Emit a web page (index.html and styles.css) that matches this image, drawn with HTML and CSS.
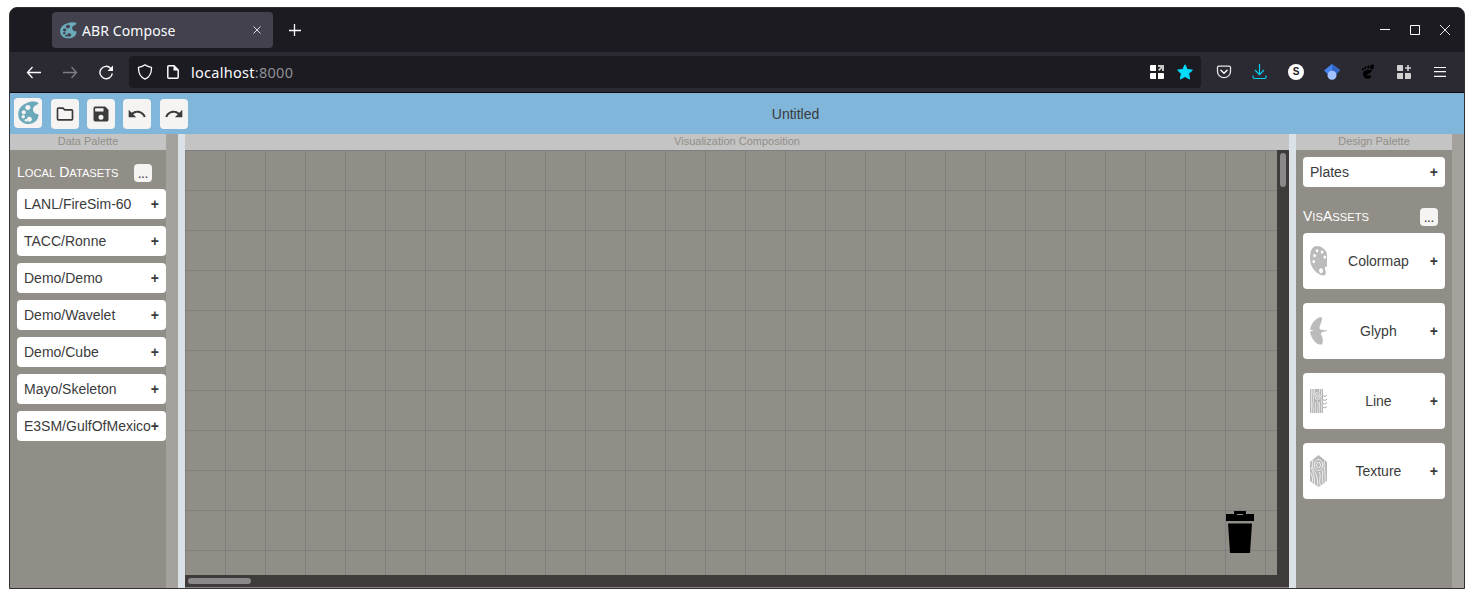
FILE: index.html
```html
<!DOCTYPE html>
<html lang="en">
<head>
<meta charset="utf-8">
<title>ABR Compose</title>
<link rel="stylesheet" href="styles.css">
</head>
<body>
<svg width="0" height="0" class="defs">
  <symbol id="palette" viewBox="0 0 21 24" preserveAspectRatio="none">
    <path fill-rule="evenodd" d="M10 1.500C13 0 19 0 20.300 2C21 4 15.500 4 15 8C14.800 11.500 18 13.500 20.300 13C21 17 18.500 21 14 22.500C9 24 3 22 1 17.500C-1 12 .5 4.500 10 1.500ZM9.800 4a2.500 2.500 0 1 0 .1 0ZM5.700 9.200a2.100 2.100 0 1 0 .1 0ZM5.200 14a1.700 1.700 0 1 0 .1 0ZM7.800 18a1.300 1.300 0 1 0 .1 0ZM11.300 15.800a2.500 2.500 0 1 0 .1 0Z"/>
  </symbol>
</svg>
<div class="window">
  <div class="tabbar">
    <div class="tab">
      <svg class="favicon" width="17" height="17"><use href="#palette"/></svg>
      <span class="tab-title">ABR Compose</span>
      <svg class="tab-close" width="8" height="8" viewBox="0 0 8 8"><path d="M.5.5l7 7M7.500.5l-7 7" fill="none" stroke="#ddd"/></svg>
    </div>
    <svg class="newtab" width="12" height="12" viewBox="0 0 12 12"><path d="M5.500 0v12M0 6.500h12" stroke="#fbfbfe" stroke-width="1.300"/></svg>
    <div class="wincontrols">
      <svg width="10" height="10" viewBox="0 0 10 10"><path d="M0 4.500h10" stroke="#fff"/></svg>
      <svg width="10" height="10" viewBox="0 0 10 10"><path d="M.5.5h9v9h-9z" fill="none" stroke="#fff"/></svg>
      <svg width="10" height="10" viewBox="0 0 10 10"><path d="M0 0l10 10M10 0L0 10" stroke="#fff" stroke-width=".9"/></svg>
    </div>
  </div>
  <div class="navbar">
    <svg class="nav-ico" width="16" height="16" viewBox="0 0 16 16"><path d="M15 8.500H1.500M6.500 3L1.500 8.500l5 5.500" fill="none" stroke="#fbfbfe" stroke-width="1.300"/></svg>
    <svg class="nav-ico dim" width="16" height="16" viewBox="0 0 16 16"><path d="M1 8.500h13.500M9.500 3l5 5.500-5 5.500" fill="none" stroke="#fbfbfe" stroke-width="1.300"/></svg>
    <svg class="nav-ico" width="16" height="16" viewBox="0 0 16 16"><path d="M12.700 4.300A6.200 6.200 0 1 0 14.300 9.300" fill="none" stroke="#fbfbfe" stroke-width="1.400"/><path d="M15 1.500v5.500H9.500z" fill="#fbfbfe"/></svg>
    <div class="urlbar">
      <svg width="16" height="16" viewBox="0 0 16 16"><path d="M8 .8C10 2.500 12 3 14.500 3.300C14.700 9 13 13 8 15.200C3 13 1.300 9 1.500 3.300C4 3 6 2.500 8 .8z" fill="none" stroke="#fbfbfe" stroke-width="1.300" stroke-linejoin="round"/></svg>
      <svg class="page" width="12" height="14" viewBox="0 0 12 14"><path d="M1.800.8H7L11.200 5v7.200a1 1 0 0 1-1 1H1.800a1 1 0 0 1-1-1V1.800a1 1 0 0 1 1-1z" fill="none" stroke="#fbfbfe" stroke-width="1.500"/><path d="M6.500.8v4.700h4.700z" fill="#fbfbfe"/></svg>
      <span class="url">localhost<span class="port">:8000</span></span>
      <svg class="apps" width="14" height="14" viewBox="0 0 14 14"><path d="M1 0h5v6H1a1 1 0 0 1-1-1V1a1 1 0 0 1 1-1zM1 8h5v6H1a1 1 0 0 1-1-1V9a1 1 0 0 1 1-1zM8 8h5a1 1 0 0 1 1 1v4a1 1 0 0 1-1 1H8z" fill="#fff"/><path d="M8 0h6v6h-2V3.500L9.300 6 8 4.700 10.500 2H8z" fill="#c8c8c4"/></svg>
      <svg width="16" height="16" viewBox="0 0 16 16"><path d="M8 .8l2.200 4.700 5.200.6-3.800 3.600 1 5.300L8 12.500 3.400 15l1-5.300L.6 6.100l5.200-.6z" fill="#00ddff" stroke="#00ddff" stroke-width="1" stroke-linejoin="round"/></svg>
    </div>
    <div class="tools">
      <svg width="16" height="16" viewBox="0 0 16 16"><path d="M2.800 2.200h10.400a1.300 1.300 0 0 1 1.300 1.300v4a6.500 6.200 0 0 1-13 0v-4a1.300 1.300 0 0 1 1.300-1.300z" fill="none" stroke="#e6e6ea" stroke-width="1.300"/><path d="M4.900 6.200L8 9.200l3.100-3" fill="none" stroke="#fbfbfe" stroke-width="1.500" stroke-linecap="round"/></svg>
      <svg width="16" height="16" viewBox="0 0 16 16"><path d="M7.500 0v10.500M3 6l4.500 4.700L12 6M1 11.500v1.500a1.500 1.500 0 0 0 1.500 1.500h10a1.500 1.500 0 0 0 1.500-1.500v-1.500" fill="none" stroke="#00cdef" stroke-width="1.200"/></svg>
      <span class="s-badge">S</span>
      <svg width="16" height="16" viewBox="0 0 16 16"><path d="M8 0L0 6.500l3.500 3.500h9L16 6z" fill="#4483ec"/><path d="M8 0v7l4.500 3L16 6z" fill="#3367c6"/><circle cx="8" cy="11.200" r="4.500" fill="#a0c3ff"/></svg>
      <svg width="16" height="16" viewBox="0 0 16 16"><ellipse cx="12" cy="3" rx="1.900" ry="2.600" transform="rotate(20 12 3)"/><ellipse cx="8.300" cy="3" rx="1.100" ry="1.700"/><ellipse cx="5.300" cy="3.800" rx="1" ry="1.500"/><ellipse cx="2.900" cy="5.300" rx=".9" ry="1.300"/><path d="M12 6.500C8 4.500 3 6.500 3 9.800C3 13 6 15.500 9 14.700C11.500 14 12 11.500 10 11.300C9 11.200 8 12.300 7.200 11.500C6 10.200 11.500 9.500 12 6.500z"/></svg>
      <svg width="16" height="16" viewBox="0 0 16 16"><path d="M2 1h4a1 1 0 0 1 1 1v5H2a1 1 0 0 1-1-1V2a1 1 0 0 1 1-1zM2 9h5v6H2a1 1 0 0 1-1-1v-4a1 1 0 0 1 1-1zM9 9h5a1 1 0 0 1 1 1v4a1 1 0 0 1-1 1H9zM11.200 1h1.600v2.200H15v1.600h-2.200V7h-1.600V4.800H9V3.200h2.200z" fill="#d2d1d2"/></svg>
      <svg width="16" height="16" viewBox="0 0 16 16"><path d="M2 3.500h12M2 7.700h12M2 12.300h12" stroke="#fbfbfe" stroke-width="1.200"/></svg>
    </div>
  </div>
  <div class="app">
    <div class="toolbar">
      <button class="tb logo"><svg width="21" height="24"><use href="#palette"/></svg></button>
      <button class="tb"><svg width="20" height="20" viewBox="0 0 24 24"><path d="M9.200 6l2 2H20v10H4V6h5.200M10 4H4a2 2 0 0 0-2 2v12a2 2 0 0 0 2 2h16a2 2 0 0 0 2-2V8a2 2 0 0 0-2-2h-8z" fill="#3b3b3b"/></svg></button>
      <button class="tb"><svg width="20" height="20" viewBox="0 0 24 24"><path d="M17 3H5a2 2 0 0 0-2 2v14a2 2 0 0 0 2 2h14a2 2 0 0 0 2-2V7zM12 19a3 3 0 1 1 0-6 3 3 0 0 1 0 6zM15 9H5V5h10z" fill="#3b3b3b"/></svg></button>
      <button class="tb"><svg width="20" height="20" viewBox="0 0 24 24"><path d="M12.500 8c-2.650 0-5.050 1-6.900 2.600L2 7v9h9l-3.620-3.620c1.390-1.160 3.160-1.880 5.120-1.880 3.540 0 6.550 2.310 7.600 5.500l2.370-.78C21.080 11.030 17.150 8 12.500 8z" fill="#3b3b3b"/></svg></button>
      <button class="tb redo"><svg width="20" height="20" viewBox="0 0 24 24"><path d="M18.400 10.600C16.550 9 14.150 8 11.500 8c-4.650 0-8.580 3.030-9.960 7.220L3.900 16c1.050-3.190 4.050-5.500 7.600-5.500 1.950 0 3.730.72 5.120 1.880L13 16h9V7z" fill="#3b3b3b"/></svg></button>
      <span class="title">Untitled</span>
    </div>
    <div class="main">
      <section class="side">
        <div class="side-body">
          <div class="panel-head">Data Palette</div>
          <div class="group-head first"><span class="caps">L<small>ocal</small> D<small>atasets</small></span><button class="more">...</button></div>
          <div class="list">
            <div class="row"><span>LANL/FireSim-60</span><b>+</b></div>
            <div class="row"><span>TACC/Ronne</span><b>+</b></div>
            <div class="row"><span>Demo/Demo</span><b>+</b></div>
            <div class="row"><span>Demo/Wavelet</span><b>+</b></div>
            <div class="row"><span>Demo/Cube</span><b>+</b></div>
            <div class="row"><span>Mayo/Skeleton</span><b>+</b></div>
            <div class="row"><span>E3SM/GulfOfMexico</span><b>+</b></div>
          </div>
        </div>
      </section>
      <section class="center">
        <div class="panel-head">Visualization Composition</div>
        <div class="scroller">
          <div class="grid">
            <svg class="trash" width="28" height="42" viewBox="0 0 28 42"><path fill-rule="evenodd" d="M8 0h12v3h8v7H0V3h8zM11 3h6v1h-6zM2 12.500h24L24 42H4z"/></svg>
          </div>
          <div class="vbar"><i></i></div>
          <div class="hbar"><i></i></div>
        </div>
      </section>
      <section class="side right">
        <div class="side-body">
          <div class="panel-head">Design Palette</div>
          <div class="list plates"><div class="row"><span>Plates</span><b>+</b></div></div>
          <div class="group-head"><span class="caps">V<small>is</small>A<small>ssets</small></span><button class="more">...</button></div>
          <div class="list cards">
            <div class="row card">
              <svg width="17" height="30" viewBox="0 0 17 30"><path fill-rule="evenodd" fill="#bbb" d="M7 0C11 0 16 3.500 17 8V20.500C15.500 20.500 14.500 21 15 23C16 25 16.500 29 14 29.500C8 29.500 0 22 0 13C0 5 2 0 7 0ZM7 3.200a1.300 1.600 0 1 0 .1 0ZM12 4.500a1.300 1.600 0 1 0 .1 0ZM4.500 8a1.300 1.600 0 1 0 .1 0ZM14.700 9.500a1.300 1.600 0 1 0 .1 0ZM3.700 14a1.300 1.600 0 1 0 .1 0ZM11 22.300a1.900 2.500 0 1 0 .1 0Z"/></svg>
              <span>Colormap</span><b>+</b></div>
            <div class="row card">
              <svg width="17" height="30" viewBox="0 0 17 30"><path fill="#bbb" d="M11.500 1C7 1 1 6.500 0 13.800L4 14.600 0 15.400C1 23 7 29.500 12 28.500C13.500 25 13 21.500 11 18.500C10.500 16.300 14 15.500 17 15V14.300C14 14.300 10 14 9.500 12.500C9 10 13.500 4 11.500 1Z"/></svg>
              <span>Glyph</span><b>+</b></div>
            <div class="row card">
              <svg width="17" height="24" viewBox="0 0 17 24"><path d="M0 0h13v24H0z" fill="#b5b5b5"/><g fill="none" stroke="#fff" stroke-width=".6"><path d="M1.500 0v24M3 0C2.500 5 4 8 3.200 12S3.500 20 3.300 24M5 13C6.500 16 4.500 19 5.500 24M11.500 0C12 4 10.500 7 11.500 12S11 19 11.500 24M7.500 12c2 5-1 8 .3 12M9.300 13c1 4-.5 7 .3 11M4.700 0C4.500 2 4 4 4.500 6M9.500 0v3"/><ellipse cx="7.500" cy="7" rx="2.500" ry="4"/><ellipse cx="7.500" cy="7" rx=".8" ry="1.900"/></g><path d="M13 6.500c1.500 1.500 2.500 1 4-.5M13 10.500c1.500 1.500 2.500 1 4-.5M13 14c1.500 1.500 2.500 1 4-.5M13 18c1.500 1.500 2.500.8 4-.7" fill="none" stroke="#aaa"/></svg>
              <span>Line</span><b>+</b></div>
            <div class="row card">
              <svg width="17" height="32" viewBox="0 0 17 32"><path d="M8.500 0L17 7v19l-8.500 6L0 26V7z" fill="#b8b8b8"/><g fill="none" stroke="#fff" stroke-width=".75"><ellipse cx="8.500" cy="10" rx="2" ry="2.800"/><ellipse cx="8.500" cy="10" rx="4.200" ry="5.500"/><path d="M3 5C1 12 4 15 6 19S7 27 8 31M1.500 12C2 17 5 20 4.500 29M0 17c2 3 3 6 2.500 10M9 17c3 4-1 8 1.500 13M12 15c2 5-1 9 1 13M14.500 6C13 12 16 18 15 27"/></g></svg>
              <span>Texture</span><b>+</b></div>
          </div>
        </div>
      </section>
    </div>
  </div>
</div>
</body>
</html>
```

FILE: styles.css
```css
* { box-sizing: border-box; }
body { margin: 0; background: #fff; font-family: "Liberation Sans", Arial, sans-serif; font-size: 14px; color: #3b3b3b; }
svg { display: block; flex: none; }
.defs { display: none; }
button { border: 0; padding: 0; font: inherit; color: inherit; }

.window { width: 1456px; height: 582px; margin: 7px 0 0 9px; border: 1px solid #323235; border-radius: 8px 8px 0 0; overflow: hidden; display: flex; flex-direction: column; background: #1c1b22; }

.tabbar { height: 44px; flex: none; display: flex; align-items: center; background: #1c1b22; }
.tab { width: 221px; height: 36px; margin: 0 0 0 42px; padding: 0 12px 0 8px; display: flex; align-items: center; background: #42414d; border-radius: 4px; color: #fbfbfe; font-family: "Noto Sans", sans-serif; }
.favicon { fill: #6baaba; }
.tab-title { margin-left: 5px; flex: 1; font-size: 14px; letter-spacing: .1px; white-space: nowrap; }
.newtab { margin-left: 16px; }
.wincontrols { margin-left: auto; padding-right: 14px; display: flex; gap: 20px; }

.navbar { height: 41px; flex: none; display: flex; align-items: center; padding: 0 16px; background: #2b2a33; border-bottom: 1px solid #0c0c0d; }
.nav-ico { margin-right: 20px; }
.dim { opacity: .4; }
.urlbar { width: 1072px; height: 32px; margin-left: -5px; padding: 0 8px; display: flex; align-items: center; background: #1c1b22; border-radius: 4px; }
.page { margin-left: 14px; }
.url { margin-left: 12px; flex: 1; font-family: "Noto Sans", sans-serif; font-size: 14.500px; letter-spacing: .28px; color: #fbfbfe; }
.port { color: #8f8f96; }
.apps { margin-right: 13px; }
.tools { margin-left: 15px; display: flex; gap: 20px; align-items: center; }
.s-badge { width: 16px; height: 16px; border-radius: 50%; background: #fff; color: #222; font: bold 10px/16px "Liberation Sans", sans-serif; text-align: center; }

.app { flex: 1; display: flex; flex-direction: column; background: #dae1e7; min-height: 0; }
.toolbar { height: 41px; flex: none; display: flex; align-items: center; gap: 8px; padding: 0 4px; background: #80b6da; position: relative; }
.tb { width: 28px; height: 30px; border-radius: 4px; background: #f6f3f3; display: flex; align-items: center; justify-content: center; }
.logo { margin: -2px 1px 0 0; fill: #6baaba; }
.redo { margin-left: 1px; }
.title { position: absolute; left: 0; right: 0; padding-left: 117px; text-align: center; width: 100%; }

.main { flex: 1; display: flex; gap: 7px; min-height: 0; }
.panel-head { height: 16px; flex: none; background: #c4c4c4; color: #918e88; font-size: 11px; line-height: 15px; text-align: center; }
.side { width: 168px; flex: none; background: #a5a29d; padding-right: 12px; display: flex; }
.side-body { width: 156px; background: #918e88; }
.group-head { display: flex; align-items: center; justify-content: space-between; color: #fff; padding: 0 14px 0 7px; height: 18px; margin: 21px 0 7px; }
.group-head.first { margin: 14px 0 7px; }
.caps { line-height: 16px; padding-bottom: 2px; }
.caps small { font-size: 11.200px; text-transform: uppercase; }
.more { width: 18px; height: 18px; border-radius: 4px; background: #f6f3f3; color: #3b3b3b; font-size: 12px; line-height: 20px; -webkit-text-stroke: .2px; }
.list { padding-left: 7px; display: grid; gap: 7px; }
.row { height: 30px; padding: 0 7px; display: flex; align-items: center; justify-content: space-between; background: #fff; border-radius: 4px; white-space: nowrap; }
.plates { padding: 7px 7px 0; }
.cards { padding-right: 7px; gap: 14px; }
.card { height: 56px; }

.center { flex: 1; display: flex; flex-direction: column; min-width: 0; }
.scroller { flex: 1; display: grid; grid-template: 425px 13px / 1fr 12px; background: #3f3b3b; }
.grid { background-color: #918e88; background-image: linear-gradient(#7f7f7f 1px, transparent 1px), linear-gradient(90deg, #7f7f7f 1px, transparent 1px); background-size: 40px 40px; display: flex; justify-content: flex-end; align-items: flex-end; padding: 0 23px 22px 0; }
.vbar { padding: 3px; }
.vbar i { display: block; width: 6px; height: 34px; border-radius: 3px; background: #8a8888; }
.hbar { grid-column: 1 / 3; padding: 3px; border-bottom: 1px solid #8a8888; }
.hbar i { display: block; width: 63px; height: 6px; border-radius: 3px; background: #8a8888; }
```
